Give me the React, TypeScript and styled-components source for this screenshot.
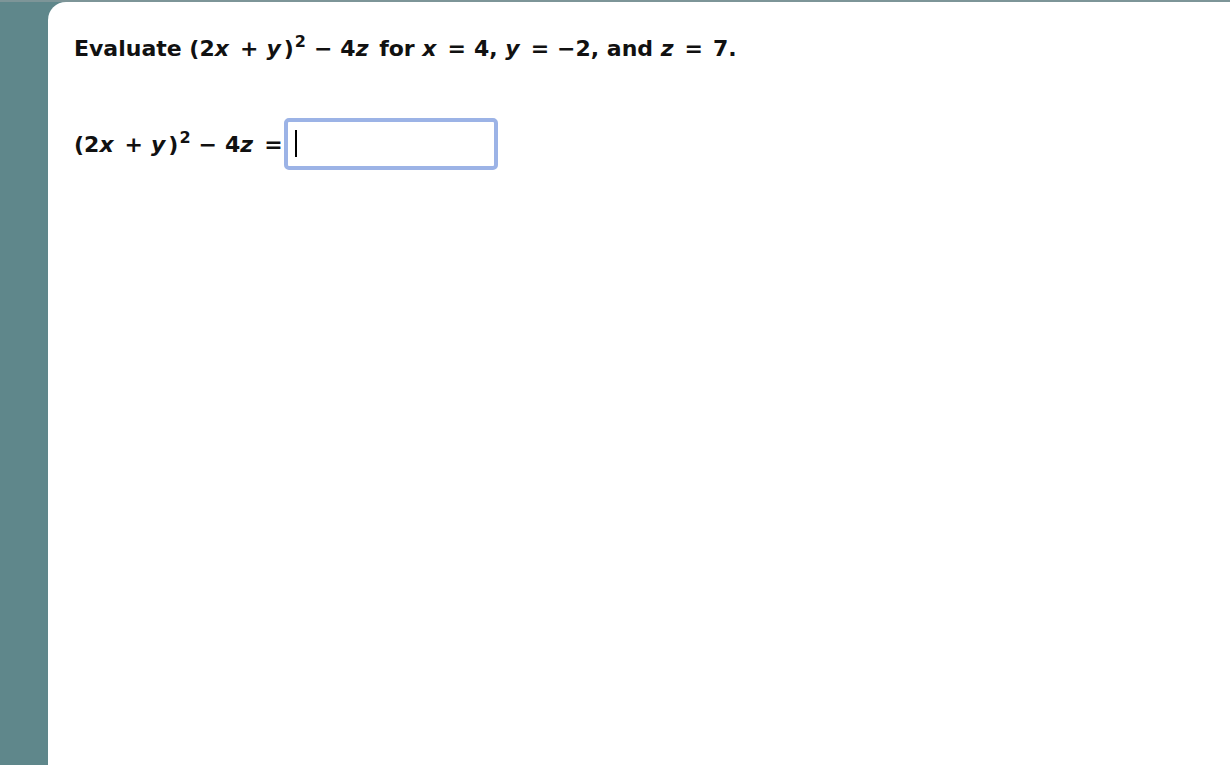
import React from "react";
import styled, { createGlobalStyle } from "styled-components";

const Global = createGlobalStyle`
  html, body { margin: 0; padding: 0; background: #5f878b; }
  body { font-family: "DejaVu Sans", "Open Sans", sans-serif; }
`;

const Page = styled.div`
  height: 765px;
  display: flex;
  padding: 2px 0 0 48px;
  box-sizing: border-box;
  background: linear-gradient(#7d9598 0, #7d9598 2px, #5f878b 2px);
`;

const Panel = styled.div`
  flex: 1;
  background: #ffffff;
  border-top-left-radius: 18px;
  padding: 30px 0 0 26px;
  color: #111;
  font-weight: 700;
  font-size: 22px;
`;

const Line = styled.div<{ $gap?: number }>`
  white-space: nowrap;
  line-height: 34px;
  margin-top: ${(p) => p.$gap ?? 0}px;
`;

const V = styled.i`
  font-style: italic;
  margin-right: 3px;
`;

const Sup = styled.sup`
  font-size: 16px;
  position: relative;
  top: -9px;
  vertical-align: baseline;
  line-height: 0;
  margin-left: 1px;
`;

const Op = styled.span<{ $tight?: boolean }>`
  margin: 0 ${(p) => (p.$tight ? "0 0 8px" : "8px")};
`;

const Trail = styled.span`
  margin-left: 2px;
`;

const AnswerBox = styled.span`
  display: inline-block;
  position: relative;
  vertical-align: middle;
  margin-left: 1px;
  top: -2px;
`;

const Answer = styled.input`
  display: block;
  width: 214px;
  height: 52px;
  box-sizing: border-box;
  border: 4px solid #9cb3e6;
  border-radius: 5px;
  outline: none;
  font: inherit;
  font-weight: 400;
  padding: 0 8px;
  caret-color: transparent;
  background: #fff;
`;

const Caret = styled.span`
  position: absolute;
  left: 11px;
  top: 12px;
  width: 2px;
  height: 27px;
  background: #000;
  pointer-events: none;
`;

export default function App() {
  return (
    <>
      <Global />
      <Page>
        <Panel>
          <Line>
            Evaluate (2<V>x</V><Op>+</Op><V>y</V>)<Sup>2</Sup><Op>−</Op>4<V>z</V> for <V>x</V><Op>=</Op>4, <V>y</V><Op>=</Op>−2, and <V>z</V><Op>=</Op><Trail>7.</Trail>
          </Line>
          <Line $gap={54}>
            (2<V>x</V><Op>+</Op><V>y</V>)<Sup>2</Sup><Op>−</Op>4<V>z</V><Op $tight>=</Op>
            <AnswerBox>
              <Answer aria-label="answer" />
              <Caret />
            </AnswerBox>
          </Line>
        </Panel>
      </Page>
    </>
  );
}
